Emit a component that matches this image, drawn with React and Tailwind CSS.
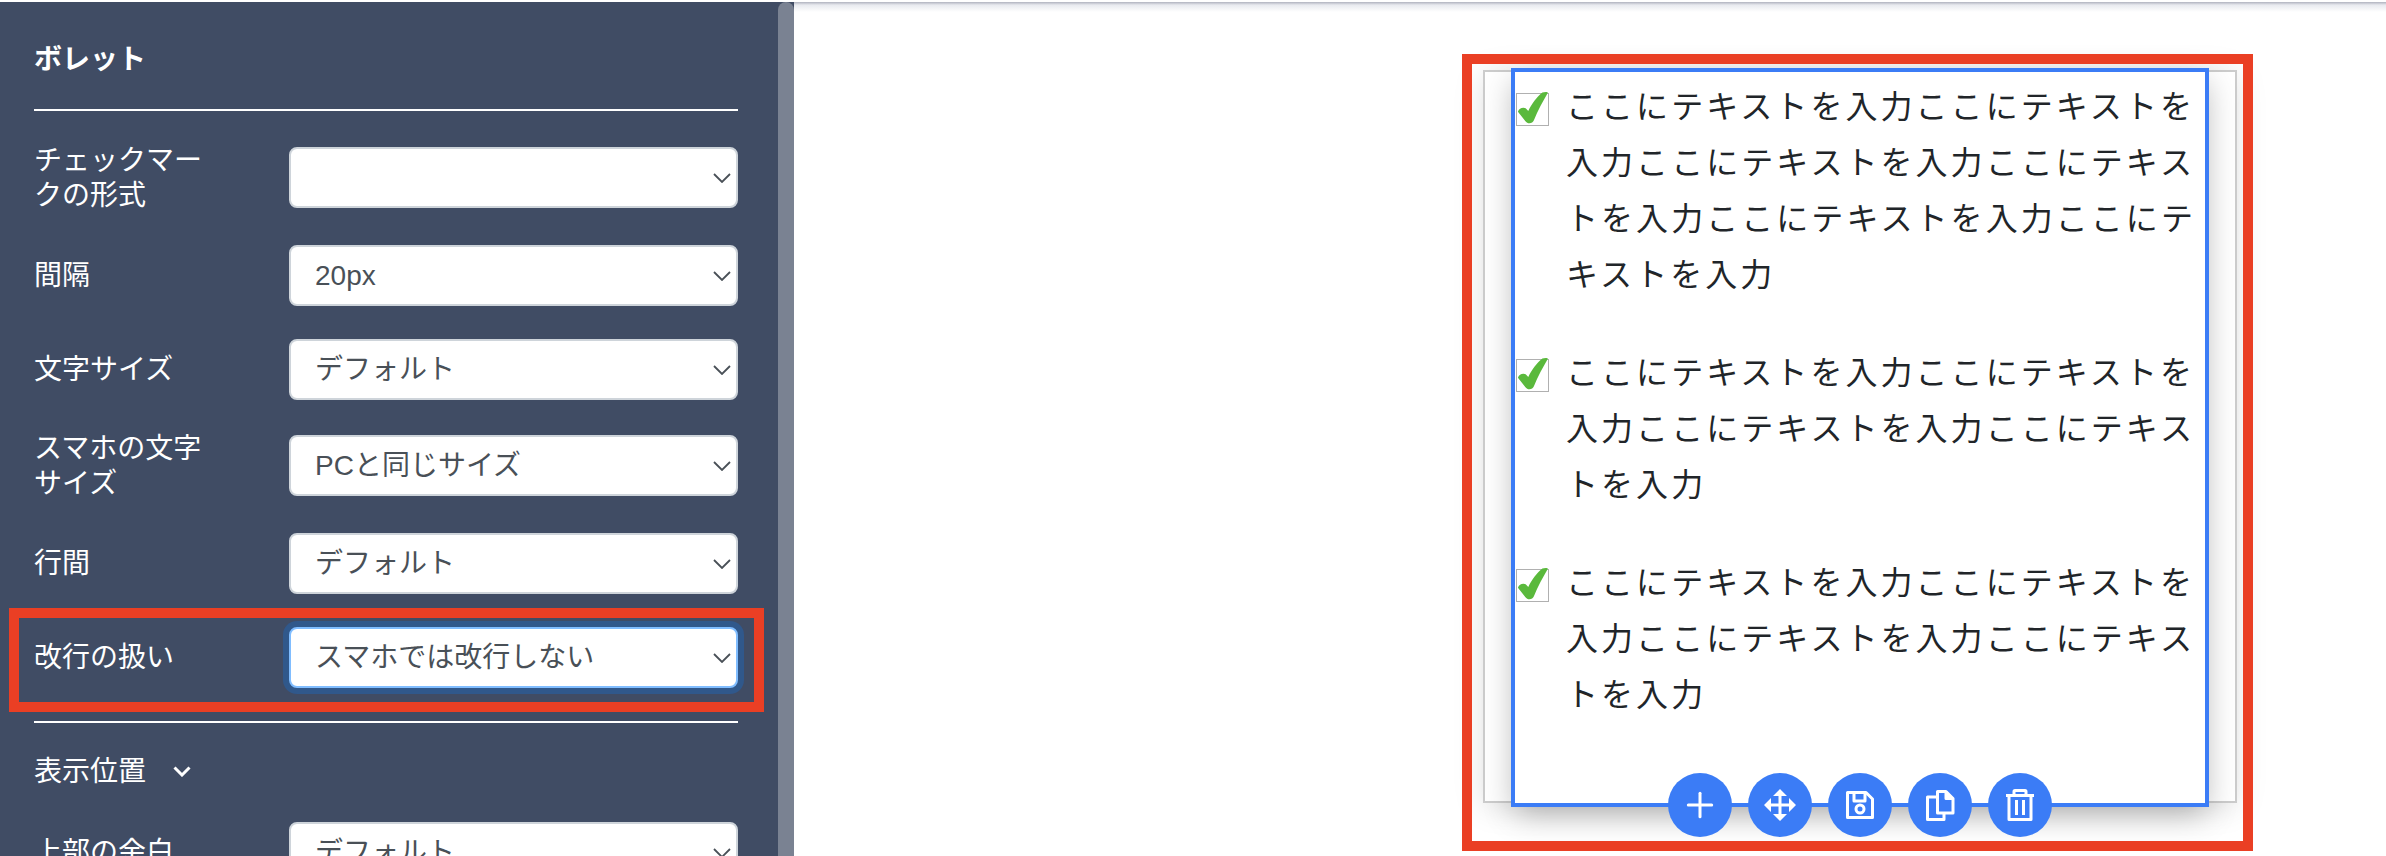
import { Plus } from 'lucide-react';

const FIELDS = [
  { label: 'チェックマークの形式', value: '', gap: 'mt-[36px]' },
  { label: '間隔', value: '20px', gap: 'mt-[37px]' },
  { label: '文字サイズ', value: 'デフォルト', gap: 'mt-[33px]' },
  { label: 'スマホの文字サイズ', value: 'PCと同じサイズ', gap: 'mt-[35px]' },
  { label: '行間', value: 'デフォルト', gap: 'mt-[37px]' },
  { label: '改行の扱い', value: 'スマホでは改行しない', gap: 'mt-[33px]', focused: true },
];

const ITEMS = [
  'ここにテキストを入力ここにテキストを入力ここにテキストを入力ここにテキストを入力ここにテキストを入力ここにテキストを入力',
  'ここにテキストを入力ここにテキストを入力ここにテキストを入力ここにテキストを入力',
  'ここにテキストを入力ここにテキストを入力ここにテキストを入力ここにテキストを入力',
];

function Chevron() {
  return (
    <svg width="18" height="10" viewBox="0 0 18 10" fill="none" className="absolute right-[7px] top-1/2 -translate-y-1/2">
      <path d="M1 1l8 8 8-8" stroke="#495057" strokeWidth="1.8" />
    </svg>
  );
}

function SelectBox({ value, focused }) {
  return (
    <div className="relative w-[449px] h-[61px] shrink-0">
      <select
        defaultValue={value}
        className={`w-full h-full appearance-none bg-white rounded-[8px] border-2 pl-[24px] text-[28px] text-[#495057] outline-none ${
          focused ? 'border-[#80bdff] shadow-[0_0_0_6px_rgba(0,123,255,0.25)]' : 'border-[#ced4da]'
        }`}
      >
        <option value={value}>{value}</option>
      </select>
      <Chevron />
    </div>
  );
}

function Field({ label, value, gap, focused }) {
  return (
    <div className={`relative flex items-center h-[61px] ${gap}`}>
      <div className="w-[255px] shrink-0 pr-[70px] text-[28px] leading-[35px] text-white">{label}</div>
      <SelectBox value={value} focused={focused} />
      {focused && (
        <div className="absolute left-[-25px] top-[-19px] w-[755px] h-[104px] border-[10px] border-[#ea3f24] pointer-events-none" />
      )}
    </div>
  );
}

function CheckMark() {
  return (
    <div className="w-[33px] h-[33px] shrink-0 mt-[14px] border border-[#b0b0b0] bg-white">
      <svg width="31" height="31" viewBox="0 0 33 33" className="block overflow-visible">
        <path
          d="M1 19C2 15 7 13.500 9.500 15.500L12 18C15.500 11 21 3 27-1.500 29-2.500 32.500-2.500 33-1.500 28 7 22 18 18 28 16.500 32 11 32 9 29Z"
          fill="#5ab93c"
        />
      </svg>
    </div>
  );
}

function ToolButton({ children }) {
  return (
    <button className="w-[64px] h-[64px] rounded-full bg-[#3b7cf6] flex items-center justify-center">{children}</button>
  );
}

function Toolbar() {
  return (
    <div className="absolute left-1/2 -translate-x-1/2 bottom-[-34px] flex gap-[16px]">
      <ToolButton>
        <Plus size={40} color="#fff" strokeWidth={3} absoluteStrokeWidth />
      </ToolButton>
      <ToolButton>
        <svg width="32" height="32" viewBox="0 0 32 32" fill="#fff">
          <path d="M16 0l7 7H9zM16 32l-7-7h14zM0 16l7-7v14zM32 16l-7 7V9z" />
          <path d="M16 4v24M4 16h24" stroke="#fff" strokeWidth="3" />
        </svg>
      </ToolButton>
      <ToolButton>
        <svg width="28" height="28" viewBox="0 0 28 28" fill="none" stroke="#fff" strokeWidth="3" strokeLinejoin="round">
          <path d="M1.500 1.500H20L26.500 8V26.500H1.500Z" />
          <path d="M8 1.500V10H19V1.500" />
          <circle cx="14" cy="18" r="4" />
        </svg>
      </ToolButton>
      <ToolButton>
        <svg width="30" height="32" viewBox="0 0 30 32" fill="none" stroke="#fff" strokeWidth="3" strokeLinejoin="round">
          <path d="M12.500 2.500H21L28 9.500V24H12.500Z" />
          <path d="M21 2.500V9.500H28" fill="#fff" />
          <path d="M12.500 8H2.500V30.500H19V24" />
        </svg>
      </ToolButton>
      <ToolButton>
        <svg width="30" height="34" viewBox="0 0 30 34" fill="none" stroke="#fff" strokeWidth="3" strokeLinejoin="round">
          <path d="M1 7.500H29" />
          <path d="M9 7V3.500Q9 2.500 10 2.500H20Q21 2.500 21 3.500V7" />
          <path d="M4 8V31.500H26V8" />
          <path d="M11.500 12V27M18.500 12V27" />
        </svg>
      </ToolButton>
    </div>
  );
}

export default function App() {
  return (
    <div
      lang="ja"
      className="flex w-full h-[856px] pt-[2px] bg-white overflow-hidden font-['Liberation_Sans','Noto_Sans_CJK_JP',sans-serif]"
    >
      {/* Sidebar */}
      <aside className="relative w-[794px] h-[854px] shrink-0 overflow-hidden bg-[#404c64] pl-[34px] pr-[56px] pt-[40px]">
        <div className="text-[28px] leading-[35px] font-bold text-white">ボレット</div>
        <div className="h-[2px] mt-[32px] bg-white" />

        {FIELDS.map((f) => (
          <Field key={f.label} {...f} />
        ))}

        <div className="h-[2px] mt-[33px] bg-white" />

        <div className="flex items-center mt-[31px] gap-[27px] text-[28px] leading-[35px] text-white">
          <span>表示位置</span>
          <svg width="18" height="11" viewBox="0 0 18 11" fill="none">
            <path d="M1.500 1.500L9 9l7.500-7.500" stroke="#fff" strokeWidth="3" />
          </svg>
        </div>

        <div className="flex items-center h-[61px] mt-[33px]">
          <div className="w-[255px] shrink-0 text-[28px] leading-[35px] text-white">上部の余白</div>
          <SelectBox value="デフォルト" />
        </div>

        {/* scrollbar thumb */}
        <div className="absolute top-0 right-0 w-[16px] h-full rounded-t-[8px] bg-[#7a8292]" />
      </aside>

      {/* Canvas */}
      <main className="relative flex-1 h-[854px] overflow-hidden">
        <div className="absolute inset-x-0 top-0 h-[10px] bg-gradient-to-b from-[#b0b3bf] via-[#e8eaef] via-30% to-white" />

        <div className="relative ml-[689px] mt-[68px] w-[754px] h-[733px] border-2 border-[#cccccc] bg-white pl-[26px] shadow-[0_4px_30px_rgba(0,0,0,0.12)]">
          <div className="relative -mt-[4px] w-[698px] h-[739px] border-4 border-[#3b7cf6] bg-white pt-[7px] pl-[1px] shadow-[0_10px_30px_-4px_rgba(0,0,0,0.3)]">
            {ITEMS.map((text, i) => (
              <div key={i} className="flex gap-[17px] mb-[42px]">
                <CheckMark />
                <p className="w-[636px] text-[32px] leading-[56px] tracking-[3.05px] text-[#212529]">{text}</p>
              </div>
            ))}
            <Toolbar />
          </div>
        </div>

        {/* annotation frame */}
        <div className="absolute left-[668px] top-[52px] w-[791px] h-[797px] border-[10px] border-[#ea3f24] pointer-events-none" />
      </main>
    </div>
  );
}
